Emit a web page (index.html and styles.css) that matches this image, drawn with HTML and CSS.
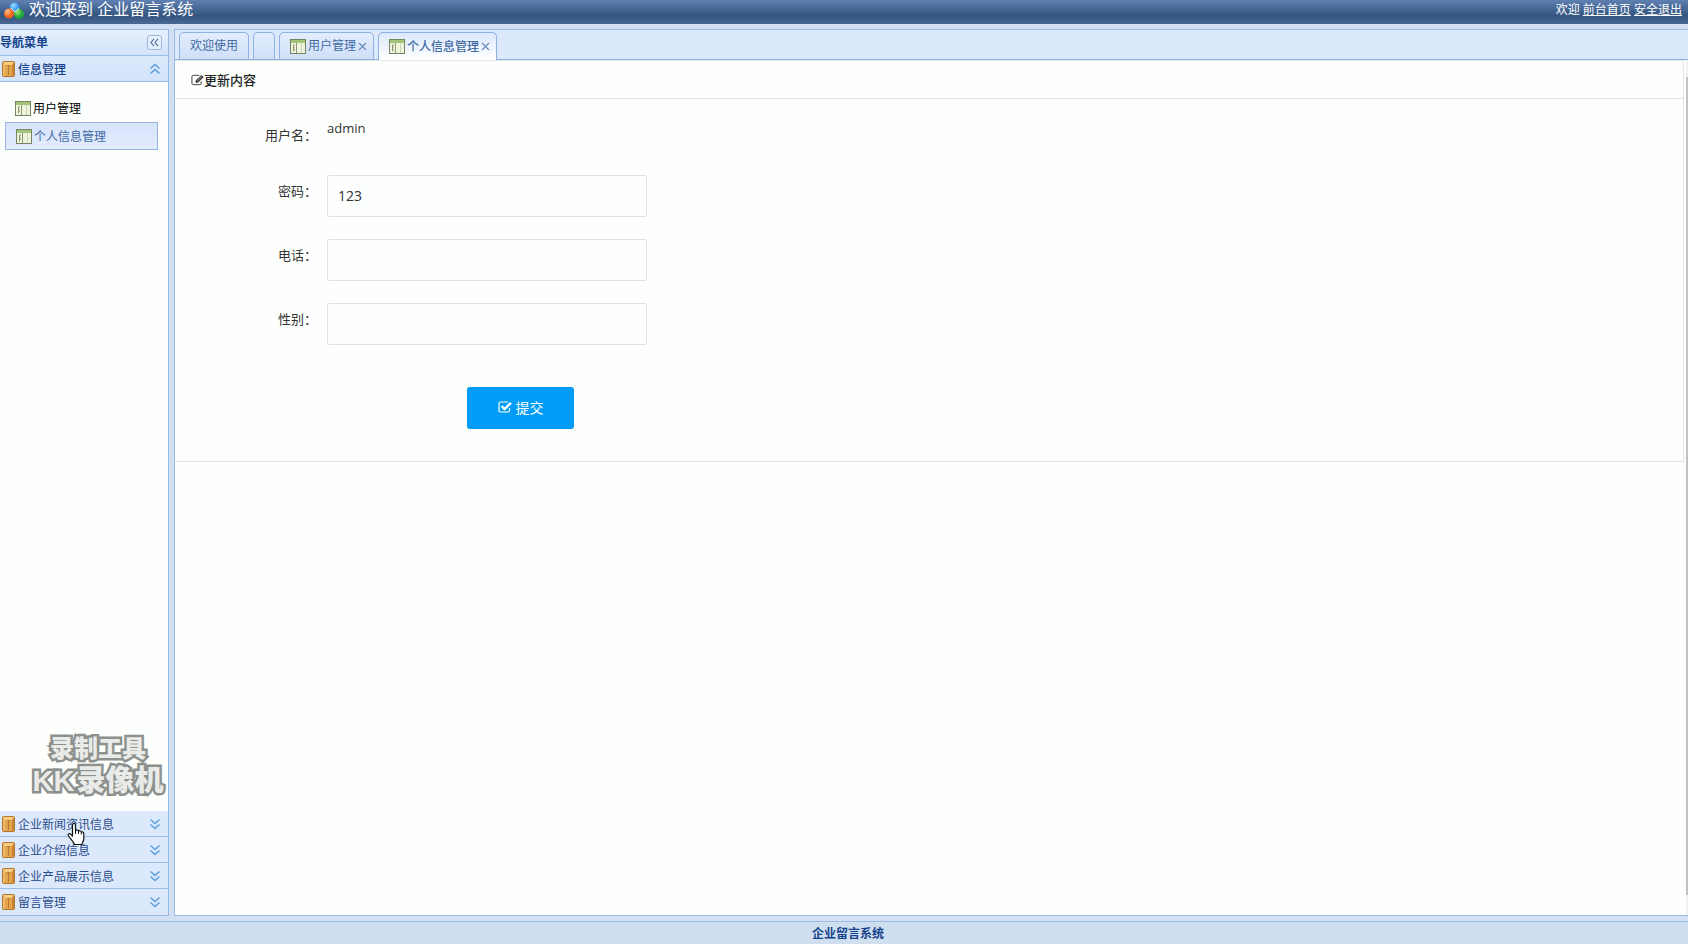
FILE: index.html
```html
<!DOCTYPE html>
<html lang="zh-CN">
<head>
  <meta charset="UTF-8" />
  <meta name="viewport" content="width=device-width, initial-scale=1.0" />
  <title>企业留言系统</title>
  <link rel="stylesheet" href="styles.css">
</head>
<body>

  <!-- 公共图标 -->
  <svg class="sprite" aria-hidden="true">
    <symbol id="icon-table" viewBox="0 0 16 15">
      <rect x="0.5" y="0.5" width="15" height="14" fill="#f0f4df" stroke="#75855f"/>
      <rect x="1" y="1" width="14" height="3" fill="#a4c47a"/>
      <path d="M6.500 4v10" stroke="#8a9a70"/>
      <path d="M11.500 4v10" stroke="#cbd6b4"/>
      <path d="M3 6h2M3 8.500h1.500M3 10.500h2M3.500 6v6.500" stroke="#8d9c70" fill="none"/>
    </symbol>
    <symbol id="icon-box" viewBox="0 0 13 16">
      <rect x="0.5" y="0.5" width="12" height="15" rx="1" fill="#e3a44e" stroke="#b5752c"/>
      <path d="M1 1h11l-2 3H3z" fill="#f6cd84"/>
      <path d="M1 1l2 3v10l-2 1z" fill="#efb967"/>
      <path d="M12 1l-2 3v10l2 1z" fill="#c98434"/>
      <path d="M6.500 4v10M5 4.500h3" stroke="#b97a2e"/>
    </symbol>
    <symbol id="icon-down" viewBox="0 0 12 12">
      <path d="M1.500 1.500L6 5.500l4.500-4M1.500 6.500L6 10.500l4.500-4" fill="none" stroke="#5b9fdc" stroke-width="1.500"/>
    </symbol>
    <symbol id="icon-up" viewBox="0 0 12 12">
      <path d="M1.500 5.500L6 1.500l4.500 4M1.500 10.500L6 6.500l4.500 4" fill="none" stroke="#5b9fdc" stroke-width="1.500"/>
    </symbol>
    <symbol id="icon-close" viewBox="0 0 9 9">
      <path d="M1 1l7 7M8 1l-7 7" stroke="#6a8cc0" stroke-width="1.200"/>
    </symbol>
  </svg>

  <!-- 顶部 -->
  <header class="header">
    <svg class="logo" viewBox="0 0 20 18">
      <defs>
        <radialGradient id="g1" cx="35%" cy="30%"><stop offset="0" stop-color="#ffc08a"/><stop offset="1" stop-color="#f5641c"/></radialGradient>
        <radialGradient id="g2" cx="40%" cy="30%"><stop offset="0" stop-color="#9fdcff"/><stop offset="1" stop-color="#2a96ee"/></radialGradient>
        <radialGradient id="g3" cx="35%" cy="30%"><stop offset="0" stop-color="#9be87a"/><stop offset="1" stop-color="#1fa83a"/></radialGradient>
      </defs>
      <circle cx="10.500" cy="5.500" r="5" fill="url(#g2)"/>
      <circle cx="5" cy="11.500" r="5" fill="url(#g1)"/>
      <circle cx="15" cy="12" r="5" fill="url(#g3)"/>
      <path d="M7 6l4 4 4-4" fill="none" stroke="#d5f1ff"/>
    </svg>
    <h1>欢迎来到 企业留言系统</h1>
    <div class="user-links">欢迎 <a href="#">前台首页</a> <a href="#">安全退出</a></div>
  </header>

  <div class="layout">

    <!-- 导航菜单 -->
    <aside class="sidebar">
      <div class="sidebar-title">
        <span>导航菜单</span>
        <button class="collapse" type="button" aria-label="收起">
          <svg viewBox="0 0 10 10"><path d="M4.500 1L1 5l3.500 4M9 1L5.500 5 9 9" fill="none" stroke="#4b6c9f" stroke-width="1.200"/></svg>
        </button>
      </div>
      <button class="group active" type="button">
        <svg class="box"><use href="#icon-box"/></svg><span>信息管理</span><svg class="arrow"><use href="#icon-up"/></svg>
      </button>
      <nav class="menu">
        <a href="#"><svg class="table-icon"><use href="#icon-table"/></svg>用户管理</a>
        <a href="#" class="selected"><svg class="table-icon"><use href="#icon-table"/></svg>个人信息管理</a>
      </nav>
      <button class="group" type="button">
        <svg class="box"><use href="#icon-box"/></svg><span>企业新闻资讯信息</span><svg class="arrow"><use href="#icon-down"/></svg>
      </button>
      <button class="group" type="button">
        <svg class="box"><use href="#icon-box"/></svg><span>企业介绍信息</span><svg class="arrow"><use href="#icon-down"/></svg>
      </button>
      <button class="group" type="button">
        <svg class="box"><use href="#icon-box"/></svg><span>企业产品展示信息</span><svg class="arrow"><use href="#icon-down"/></svg>
      </button>
      <button class="group" type="button">
        <svg class="box"><use href="#icon-box"/></svg><span>留言管理</span><svg class="arrow"><use href="#icon-down"/></svg>
      </button>

      <div class="watermark">
        <div class="line-small">录制工具</div>
        <div class="line-big"><span>KK</span><span>录像机</span></div>
      </div>
      <svg class="cursor" viewBox="0 0 18 24">
        <path d="M5.500 14V3.500c0-3 3-3 3 0V9c.5-1.500 2.800-1.200 3 .3.700-1 2.700-.7 2.800.8.900-.7 2.500-.1 2.500 1.400v5c0 3-1.500 4-2 6H7.500C6 19 3 16.500 1.300 13.500c-.7-1.700 1.200-2.500 2.300-1.400z" fill="#fff" stroke="#111" stroke-width="1.200" stroke-linejoin="round"/>
        <path d="M8.500 9v3M11.500 9.500V12M14.300 10.500V12.500" stroke="#111"/>
      </svg>
    </aside>

    <!-- 内容区 -->
    <main class="main">
      <div class="tabs">
        <a href="#" class="tab">欢迎使用</a>
        <a href="#" class="tab" aria-label="空白"></a>
        <a href="#" class="tab closable"><svg class="table-icon"><use href="#icon-table"/></svg>用户管理<svg class="close"><use href="#icon-close"/></svg></a>
        <a href="#" class="tab closable current"><svg class="table-icon"><use href="#icon-table"/></svg>个人信息管理<svg class="close"><use href="#icon-close"/></svg></a>
      </div>
      <div class="content">
        <section class="panel">
          <h2>
            <svg viewBox="0 0 14 12"><path d="M11 7.500v2a1.500 1.500 0 0 1-1.500 1.500h-7A1.500 1.500 0 0 1 1 9.500v-7A1.500 1.500 0 0 1 2.500 1H9" fill="none" stroke="#333"/><path d="M5 9V6.500L11.500.5l2.200 2.200L7.500 9z" fill="#333"/><path d="M6.500 7.300l5.300-5" stroke="#fff" stroke-width=".6"/></svg>更新内容
          </h2>
          <form class="form">
            <div class="row">
              <span class="label">用户名：</span>
              <span class="value">admin</span>
            </div>
            <div class="row">
              <label class="label" for="password">密码：</label>
              <input type="text" id="password" value="123">
            </div>
            <div class="row">
              <label class="label" for="phone">电话：</label>
              <input type="text" id="phone">
            </div>
            <div class="row">
              <label class="label" for="sex">性别：</label>
              <input type="text" id="sex">
            </div>
            <button class="submit" type="submit">
              <svg viewBox="0 0 14 12"><path d="M11.500 7v2.500a1.500 1.500 0 0 1-1.500 1.500H2.500A1.500 1.500 0 0 1 1 9.500v-7A1.500 1.500 0 0 1 2.500 1H10" fill="none" stroke="#fff" stroke-width="1.200"/><path d="M3.500 5l3 3L13 1.800" fill="none" stroke="#fff" stroke-width="2.400"/></svg>
              提交
            </button>
          </form>
        </section>
        <div class="scrollbar"><div class="thumb"></div></div>
      </div>
    </main>
  </div>

  <footer class="footer">企业留言系统</footer>

</body>
</html>
```

FILE: styles.css
```css
* {
  box-sizing: border-box;
}

body {
  margin: 0;
  height: 100vh;
  display: flex;
  flex-direction: column;
  overflow: hidden;
  font-family: "Open Sans", "Noto Sans CJK SC", sans-serif;
  font-size: 12px;
  background: #d2e0f2;
}

a {
  color: inherit;
  text-decoration: none;
}

button {
  font-family: inherit;
  cursor: pointer;
}

.sprite {
  display: none;
}

.table-icon {
  width: 16px;
  height: 15px;
  flex: none;
}

/* 顶部 */
.header {
  flex: none;
  display: flex;
  height: 24px;
  padding: 0 6px 0 4px;
  line-height: 19px;
  color: #fff;
  background: linear-gradient(#5f80b2, #33557f 65%, #4a6796);
}

.logo {
  width: 20px;
  height: 18px;
  margin: 2px 5px 0 0;
}

.header h1 {
  flex: 1;
  margin: 0;
  font-size: 16px;
  font-weight: normal;
}

.user-links a {
  text-decoration: underline;
}

/* 主体 */
.layout {
  flex: 1;
  min-height: 0;
  display: flex;
  gap: 5px;
  padding: 5px 0;
}

/* 左侧导航 */
.sidebar {
  position: relative;
  width: 169px;
  flex: none;
  display: flex;
  flex-direction: column;
  background: #fdfffd;
  border: 1px solid #99bbe8;
  border-left: none;
}

.sidebar-title {
  display: flex;
  align-items: center;
  justify-content: space-between;
  height: 25px;
  padding-right: 6px;
  font-weight: bold;
  line-height: 16px;
  color: #15428b;
  background: linear-gradient(#e6effd, #d3e3fa);
}

.collapse {
  display: flex;
  align-items: center;
  justify-content: center;
  width: 15px;
  height: 15px;
  padding: 0;
  background: #e6effc;
  border: 1px solid #9fb6e0;
  border-radius: 3px;
}

.collapse svg {
  width: 9px;
  height: 9px;
}

.group {
  display: flex;
  align-items: center;
  gap: 3px;
  flex: none;
  height: 26px;
  padding: 0 7px 0 2px;
  font-size: 12px;
  text-align: left;
  color: #2b4d8c;
  background: #dce8fb;
  border: none;
  border-bottom: 1px solid #99bbe8;
}

.group:last-of-type {
  border-bottom: none;
}

.group span {
  flex: 1;
}

.group.active {
  font-weight: 500;
  color: #15428b;
  border-top: 1px solid #99bbe8;
  background: linear-gradient(#dde9fc, #d3e3fa);
  height: 27px;
}

.box {
  width: 13px;
  height: 16px;
}

.arrow {
  width: 12px;
  height: 12px;
}

.menu {
  flex: 1;
  padding: 12px 10px 0 5px;
}

.menu a {
  display: flex;
  align-items: center;
  gap: 2px;
  height: 28px;
  padding: 0 10px;
  color: #000;
}

.menu a.selected {
  color: #416aa3;
  background: linear-gradient(#d6e3fb, #e2ecfd);
  border: 1px solid #99b3e4;
}

/* 录制水印 */
.watermark {
  position: absolute;
  left: 31px;
  bottom: 117px;
  width: 134px;
  font-family: "Liberation Sans", "Noto Sans CJK SC", sans-serif;
  font-weight: 900;
  color: #e9ebe9;
  -webkit-text-stroke: 5px #8d918e;
  paint-order: stroke fill;
  text-align: center;
  pointer-events: none;
}

.line-small {
  font-size: 24px;
  line-height: 30px;
}

.line-big {
  display: flex;
  justify-content: center;
  gap: 2px;
  font-size: 29px;
  line-height: 34px;
}

.cursor {
  position: absolute;
  left: 67px;
  bottom: 69px;
  width: 18px;
  height: 24px;
  pointer-events: none;
}

/* 标签页 */
.main {
  flex: 1;
  min-width: 0;
  display: flex;
  flex-direction: column;
  background: #fdfffd;
  border: 1px solid #99bbe8;
  border-right: none;
}

.tabs {
  display: flex;
  gap: 4px;
  height: 30px;
  padding: 2px 4px 0;
  background: #dce8fb;
  border-bottom: 1px solid #8db2e3;
}

.tab {
  display: flex;
  align-items: center;
  height: 27px;
  padding: 0 10px;
  line-height: 16px;
  color: #416aa3;
  background: linear-gradient(#e3edfd, #cfdff8);
  border: 1px solid #8db2e3;
  border-bottom: none;
  border-radius: 5px 5px 0 0;
}

.tab.closable {
  gap: 2px;
  padding: 0 6px 0 10px;
}

.tab.current {
  height: 28px;
  font-weight: 500;
  background: linear-gradient(#dbe8fc, #fff);
}

.close {
  width: 9px;
  height: 9px;
}

/* 内容面板 */
.content {
  flex: 1;
  display: flex;
  align-items: flex-start;
}

.panel {
  flex: 1;
  margin-right: 2px;
  border: 1px solid #e2e4e4;
  border-left: none;
}

.panel h2 {
  display: flex;
  align-items: center;
  height: 38px;
  margin: 0;
  padding: 0 16px;
  font-size: 13px;
  font-weight: 500;
  line-height: 18px;
  color: #222;
  border-bottom: 1px solid #e2e4e4;
}

.panel h2 svg {
  width: 13px;
  height: 12px;
}

.form {
  display: flex;
  flex-direction: column;
  gap: 22px;
  padding: 20px 0 32px;
  color: #333;
}

.row {
  display: flex;
  align-items: flex-start;
  gap: 10px;
}

.label {
  width: 142px;
  padding: 7px 0 9px;
  font-size: 13px;
  line-height: 18px;
  text-align: right;
}

.value {
  font-size: 13px;
  line-height: 18px;
}

.form input {
  width: 320px;
  height: 42px;
  padding: 0 10px 2px;
  font-family: inherit;
  font-size: 14px;
  color: #333;
  background: #fdfffd;
  border: 1px solid #e0e2e2;
  border-radius: 2px;
}

.submit {
  display: flex;
  align-items: center;
  justify-content: center;
  gap: 4px;
  width: 107px;
  height: 42px;
  margin: 20px 0 0 292px;
  padding: 0 0 2px;
  font-size: 14px;
  color: #fff;
  background: #009cf5;
  border: none;
  border-radius: 3px;
}

.submit svg {
  width: 14px;
  height: 12px;
}

.scrollbar {
  align-self: stretch;
  width: 2px;
  padding: 17px 0 20px;
  background: #f0f0f0;
}

.thumb {
  height: 100%;
  background: #c1c1c1;
}

/* 底部 */
.footer {
  flex: none;
  height: 23px;
  padding-left: 8px;
  line-height: 24px;
  text-align: center;
  font-weight: bold;
  color: #15428b;
  background: #cfdff0;
  border-top: 1px solid #99bbe8;
}
```
